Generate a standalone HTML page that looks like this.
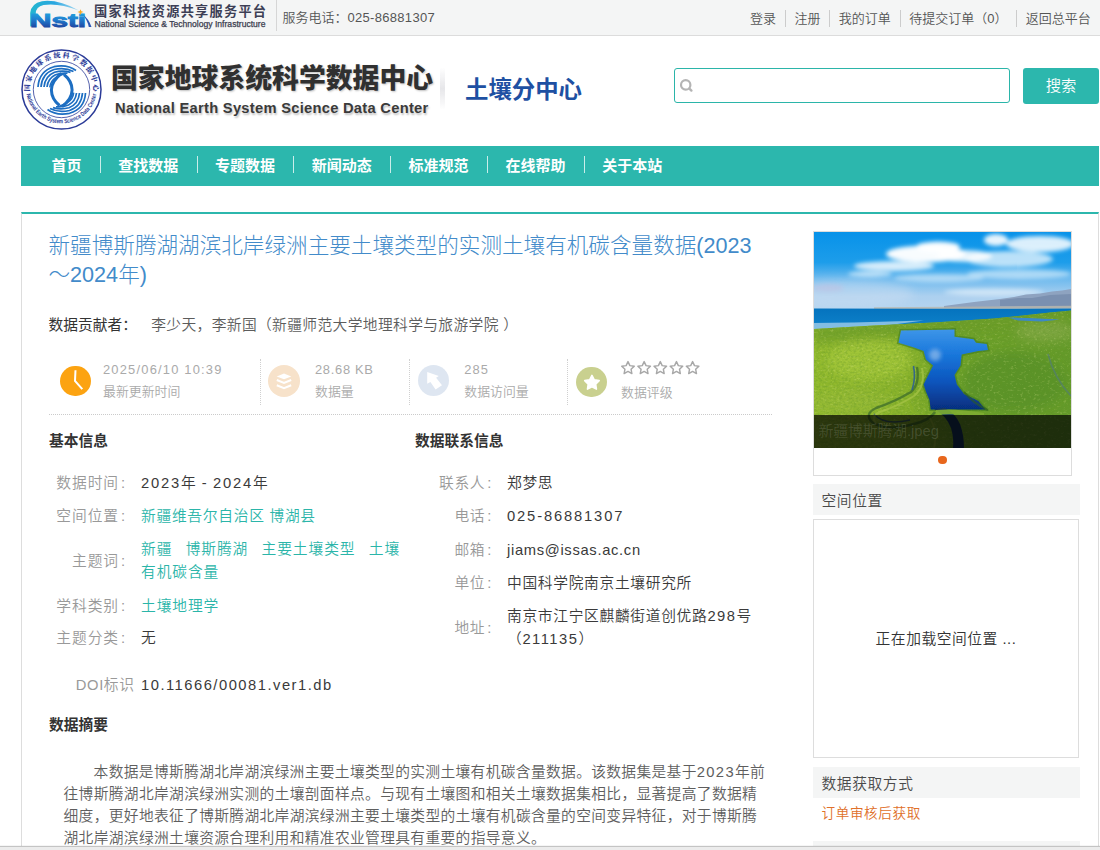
<!DOCTYPE html>
<html lang="zh-CN">
<head>
<meta charset="utf-8">
<title>新疆博斯腾湖湖滨北岸绿洲主要土壤类型的实测土壤有机碳含量数据(2023～2024年)</title>
<style>
*{box-sizing:border-box;margin:0;padding:0}
html,body{width:1100px;height:850px;overflow:hidden;background:#fff}
body{position:relative;font-family:"Liberation Sans","Noto Sans CJK SC",sans-serif;color:#333;font-size:12.6px;font-weight:350}
a{text-decoration:none;color:inherit}
.abs{position:absolute}
/* top bar */
#topbar{position:absolute;left:0;top:0;width:1100px;height:36px;background:#f4f5f5;border-bottom:1px solid #dcdcdc}
#topbar .vsep{position:absolute;left:276px;top:0;width:1px;height:31px;background:#d6d6d6}
#tel{position:absolute;left:282.5px;top:0;line-height:35px;font-size:13px;color:#555;white-space:nowrap}
#toplinks a{position:relative;top:.5px}
#toplinks{position:absolute;right:.5px;top:9.5px;height:17px;display:flex;font-size:13px;color:#555;line-height:17px;white-space:nowrap}
#toplinks a{display:block;padding:0 8.7px;border-left:1px solid #ccc}
#toplinks a:first-child{border-left:none}
/* header */
#title1{position:absolute;left:111px;top:59px;font-size:26.85px;font-weight:900;color:#303030;white-space:nowrap;line-height:40px;letter-spacing:0;text-shadow:1px 1px 2px rgba(0,0,0,.25)}
#title2{position:absolute;left:115px;top:97.5px;font-size:14.7px;letter-spacing:.28px;font-weight:bold;color:#3a3a3a;white-space:nowrap;line-height:20px;text-shadow:1px 2px 2px rgba(0,0,0,.25)}
#hsep{position:absolute;left:440px;top:67px;width:4.5px;height:43px;background:linear-gradient(to bottom,rgba(200,200,200,0),rgba(222,222,226,.75) 50%,rgba(200,200,200,0));filter:blur(.6px)}
#subcenter{position:absolute;left:465px;top:72.5px;font-size:23.4px;font-weight:bold;color:#1e50a2;white-space:nowrap;line-height:34px}
#search{position:absolute;left:674px;top:68px;width:336px;height:35px;border:1px solid #2bb5a9;border-radius:3px;background:#fff}
#sbtn{position:absolute;left:1023px;top:68px;width:76px;height:36px;border-radius:3px;background:#2cb7ad;color:#fff;font-size:15.3px;line-height:36px;text-align:center}
/* nav */
#nav{position:absolute;left:21px;top:146px;width:1078px;height:40px;background:#2cb7ad;color:#fff;font-weight:bold;font-size:15px;line-height:40px;white-space:nowrap;padding-left:12px;display:flex}
#nav a{display:block;padding:0 18.4px;position:relative}
#nav a+a:before{content:"";position:absolute;left:0;top:10px;width:1px;height:17px;background:rgba(255,255,255,.75)}
/* content */
#content{position:absolute;left:21px;top:212px;width:1078px;height:640px;border-top:2px solid #2cb7ad;border-left:1px solid #ddd;border-right:1px solid #ddd}
#scroll{position:absolute;left:0;top:846px;width:1100px;height:4px;background:#ececec;border-top:1px solid #c4c4c4;box-shadow:0 -1px 0 rgba(0,0,0,.04)}

/* detail left */
#main{position:absolute;left:27px;top:0;width:724px}
#dtitle{position:absolute;left:26.5px;top:17px;width:722px;font-size:21.6px;line-height:29.2px;color:#428bca;font-weight:300;word-break:break-all}
#contrib{position:absolute;left:26.5px;top:100px;font-weight:400;font-size:14.74px;line-height:22px;color:#333;white-space:nowrap}
#contrib span{color:#5c5c5c;font-weight:350;margin-left:14.3px;letter-spacing:.38px}
#stats{position:absolute;left:27px;top:144px;width:723px;height:57px;border-bottom:1px dotted #cbcbcb}
.stat{position:absolute;top:0;height:57px}
.stat .vd{position:absolute;left:0;top:1px;width:0;height:46px;border-left:1px dotted #d0d0d0}
.stat .ic{position:absolute;border-radius:50%}
.stat .ic svg{display:block}
.stat .v{position:absolute;top:2px;font-size:12.9px;letter-spacing:.9px;color:#aaa;white-space:nowrap;line-height:20px}
.stat .l{position:absolute;top:24.4px;font-size:12.9px;color:#aaa;white-space:nowrap;line-height:20px}
.h4{position:absolute;font-size:14.74px;font-weight:bold;color:#333;line-height:20px;white-space:nowrap}
table.info{position:absolute;border-collapse:collapse;font-size:14.74px;letter-spacing:.92px;line-height:22.5px}
#t2{letter-spacing:.68px}
.lt{letter-spacing:1.5px}
table.info td{padding:0;vertical-align:middle}
table.info tr{height:32.6px}
table.info tr.two{height:57.4px}
#t2 tr{height:33.3px}
#t2 tr.two{height:56.2px}
table.info td.k i{font-style:normal;margin-left:2px}
table.info td.k{color:#999;text-align:right;white-space:nowrap;padding-right:15px}
table.info td.v{color:#3a3a3a}
table.info a{color:#2bb5a9}
#abs{position:absolute;left:41.5px;top:546.6px;width:706px;font-size:14.74px;letter-spacing:.345px;line-height:22.05px;color:#5e5e5e;font-weight:350;text-indent:30.1px;word-break:break-all}
/* sidebar */
#pic{position:absolute;left:791px;top:17px;width:259px;height:245px;border:1px solid #ddd;background:#fff}
#pic svg{position:absolute;left:0;top:0}
#cap{position:absolute;left:0;top:182.6px;width:257px;height:33.4px;background:rgba(0,0,0,.7);color:rgba(255,255,255,.14);font-size:14.74px;line-height:32px;padding-left:4.5px;white-space:nowrap;overflow:hidden}
#dot{position:absolute;left:124.3px;top:223.8px;width:8.6px;height:8.6px;border-radius:50%;background:#e8671d}
.sh{position:absolute;left:791px;width:267px;height:31px;background:#f4f5f5;font-size:14.74px;letter-spacing:.6px;line-height:35.4px;padding-left:8.5px;color:#4a4a4a;overflow:hidden;white-space:nowrap}
#map{position:absolute;left:791px;top:305px;width:266px;height:239px;border:1px solid #ddd;font-size:14.74px;letter-spacing:.55px;line-height:239px;text-align:center;color:#333}
#getway{position:absolute;left:799.5px;top:590.3px;font-size:13.6px;letter-spacing:.6px;line-height:20px;color:#e0702a;white-space:nowrap}
</style>
</head>
<body>
<div id="topbar">
  <svg id="nsti" class="abs" style="left:28px;top:0" width="250" height="35" viewBox="0 0 250 35">
    <defs><linearGradient id="ng" x1="0" y1="0" x2="0" y2="1"><stop offset="0" stop-color="#21b4e2"/><stop offset=".45" stop-color="#1f7fd0"/><stop offset="1" stop-color="#1f2f8e"/></linearGradient>
    <linearGradient id="sw" x1="0" y1="0" x2="1" y2="0"><stop offset="0" stop-color="#22b6cf"/><stop offset=".5" stop-color="#2aa6e0"/><stop offset="1" stop-color="#6cc4ee" stop-opacity=".6"/></linearGradient></defs>
    <path d="M2.2 26.5 L2.2 13 Q3 3.5 14 1.2 Q30 -1 51 10.5 Q30 2.5 15.5 5 Q7.5 7 7.8 14 L7.8 26.5Z" fill="url(#sw)"/>
    <path d="M53.5 13 Q61 19 63.5 27 L60.8 27 Q59.5 20 53.5 13Z" fill="#2a55b4"/>
    <text x="2" y="26.8" font-family="'Liberation Sans',sans-serif" font-weight="bold" font-size="18.5" fill="url(#ng)" stroke="url(#ng)" stroke-width=".9" textLength="56" lengthAdjust="spacingAndGlyphs">Nsti</text>
    <path d="M52.5 9.2 L53.4 11.3 L55.6 12 L53.4 12.8 L52.5 15 L51.6 12.8 L49.4 12 L51.6 11.3Z" fill="#f7a823"/>
    <text x="66" y="15.5" font-family="'Liberation Sans','Noto Sans CJK SC',sans-serif" font-weight="bold" font-size="13.2" fill="#3d3f55" textLength="172" lengthAdjust="spacing">国家科技资源共享服务平台</text>
    <text x="66.5" y="26.6" font-family="'Liberation Sans',sans-serif" font-size="8.3" fill="#3a3c4e" stroke="#3a3c4e" stroke-width=".25" textLength="171" lengthAdjust="spacingAndGlyphs">National Science &amp; Technology Infrastructure</text>
  </svg>
  <div class="vsep"></div>
  <div id="tel">服务电话：<span style="letter-spacing:.3px">025-86881307</span></div>
  <div id="toplinks"><a>登录</a><a>注册</a><a>我的订单</a><a>待提交订单（0）</a><a>返回总平台</a></div>
</div>
<svg id="logo" class="abs" style="left:19px;top:47px" width="85" height="85" viewBox="-42.5 -42.5 85 85">
  <defs>
    <path id="arcT" d="M-30.6 9 A31.9 31.9 0 1 1 30.6 9"/>
    <path id="arcB" d="M-35.4 -1.5 A35.4 35.4 0 0 0 35.4 -1.5"/>
    <g id="swirl" fill="none" stroke="#1d6ec2" stroke-linecap="butt">
      <path d="M0.5 -16.5 Q-9.5 -9 -9.6 0 Q-9.5 9 -1.5 15.5" stroke-width="3"/>
      <path d="M-23 -3 Q-22 -19 -7 -23.3 Q6 -26 15 -19.5" stroke-width="1.7"/>
      <path d="M-20 -3 Q-19 -16.5 -7 -20.5 Q4 -23 12.5 -18.5" stroke-width="1.7"/>
      <path d="M-17 -3 Q-16 -14 -6.5 -17.8 Q2 -20 9.5 -17.6" stroke-width="1.7"/>
      <path d="M-14 -3 Q-13 -11.5 -6 -15 Q0 -17.5 6.5 -16.8" stroke-width="1.7"/>
      <path d="M-11.2 -2.6 Q-10.5 -9 -5 -12.6 Q-1 -15 3 -16" stroke-width="1.6"/>
    </g>
  </defs>
  <circle r="39.5" fill="#fff" stroke="#2b3b98" stroke-width="1.5"/>
  <circle r="28.2" fill="none" stroke="#2b3b98" stroke-width=".8"/>
  <text font-family="'Liberation Serif','Noto Serif CJK SC',serif" font-weight="900" font-size="7" fill="#2b3b98"><textPath href="#arcT" startOffset="50%" text-anchor="middle" textLength="104" lengthAdjust="spacing">国家地球系统科学数据中心</textPath></text>
  <text font-family="'Liberation Sans',sans-serif" font-weight="bold" font-size="6" fill="#2b3b98"><textPath href="#arcB" startOffset="50%" text-anchor="middle" textLength="99" lengthAdjust="spacingAndGlyphs">National Earth System Science Data Center</textPath></text>
  <use href="#swirl" transform="translate(-.5 .5)"/>
  <use href="#swirl" transform="rotate(180) translate(-1 -.5)"/>
</svg>
<div id="title1">国家地球系统科学数据中心</div>
<div id="title2">National Earth System Science Data Center</div>
<div id="hsep"></div>
<div id="subcenter">土壤分中心</div>
<div id="search"><svg class="abs" style="left:4px;top:9px" width="16" height="16" viewBox="0 0 16 16"><circle cx="6.7" cy="6.9" r="4.7" fill="none" stroke="#b4b4b4" stroke-width="2.2"/><path d="M10.4 10.6 L12.4 12.6" stroke="#b4b4b4" stroke-width="2.4" stroke-linecap="round"/></svg></div>
<div id="sbtn">搜索</div>
<div id="nav"><a>首页</a><a>查找数据</a><a>专题数据</a><a>新闻动态</a><a>标准规范</a><a>在线帮助</a><a>关于本站</a></div>
<div id="content">
  <h3 id="dtitle">新疆博斯腾湖湖滨北岸绿洲主要土壤类型的实测土壤有机碳含量数据(2023～2024年)</h3>
  <div id="contrib">数据贡献者：<span>李少天，李新国（新疆师范大学地理科学与旅游学院 ）</span></div>
  <div id="stats">
    <div class="stat" style="left:0"><div class="ic" style="left:11.2px;top:7.9px;width:30.4px;height:30.4px;background:#fca311"><svg width="30.4" height="30.4" viewBox="-15.2 -15.2 30.4 30.4"><path d="M.3 -11 L-.2 -.4 L7.1 8" fill="none" stroke="#fff" stroke-width="2" stroke-linejoin="miter"/></svg></div><div class="v" style="left:54px;letter-spacing:1.2px">2025/06/10 10:39</div><div class="l" style="left:54px">最新更新时间</div></div>
    <div class="stat" style="left:211px"><div class="vd"></div><div class="ic" style="left:7.7px;top:6.7px;width:32px;height:32px;background:#f7e2ca"><svg width="32" height="32" viewBox="-16 -16 32 32"><path d="M0 -7.4 L7.3 -4.6 L0 -1.8 L-7.3 -4.6Z" fill="#fff"/><path d="M-7.2 -1 L0 1.9 L7.2 -1 M-7.2 4.2 L0 7.1 L7.2 4.2" fill="none" stroke="#fff" stroke-width="2"/></svg></div><div class="v" style="left:55px;letter-spacing:.7px">28.68 KB</div><div class="l" style="left:55px">数据量</div></div>
    <div class="stat" style="left:360px"><div class="vd"></div><div class="ic" style="left:9.2px;top:6.9px;width:31px;height:31px;background:#dee6f1"><svg width="31" height="31" viewBox="-15.5 -15.5 31 31"><path d="M-6.3 -8.4 L5.3 -4.4 L2.6 -2.7 L8.5 4.7 L2.1 8.9 L-3.1 1.5 L-6.3 3.2Z" fill="#fff"/></svg></div><div class="v" style="left:55.3px;letter-spacing:1.1px">285</div><div class="l" style="left:55.3px">数据访问量</div></div>
    <div class="stat" style="left:518px"><div class="vd"></div><div class="ic" style="left:9.1px;top:8.7px;width:30.7px;height:30.7px;background:#c9d08f"><svg width="30.7" height="30.7" viewBox="-15.35 -15.35 30.7 30.7"><path d="M0.60 -7.00 L2.89 -2.56 L7.83 -1.75 L4.31 1.81 L5.07 6.75 L0.60 4.50 L-3.87 6.75 L-3.11 1.81 L-6.63 -1.75 L-1.69 -2.56Z" fill="#fff" stroke="#fff" stroke-width="1.6" stroke-linejoin="round"/></svg></div><svg class="abs" style="left:53px;top:1.5px" width="84" height="16" viewBox="0 0 84 16" fill="none" stroke="#a8a8a8" stroke-width="1.45" stroke-linejoin="round"><path d="M8.00 1.60 L9.88 5.61 L14.28 6.16 L11.04 9.19 L11.88 13.54 L8.00 11.40 L4.12 13.54 L4.96 9.19 L1.72 6.16 L6.12 5.61Z"/><path d="M24.15 1.60 L26.03 5.61 L30.43 6.16 L27.19 9.19 L28.03 13.54 L24.15 11.40 L20.27 13.54 L21.11 9.19 L17.87 6.16 L22.27 5.61Z"/><path d="M40.30 1.60 L42.18 5.61 L46.58 6.16 L43.34 9.19 L44.18 13.54 L40.30 11.40 L36.42 13.54 L37.26 9.19 L34.02 6.16 L38.42 5.61Z"/><path d="M56.45 1.60 L58.33 5.61 L62.73 6.16 L59.49 9.19 L60.33 13.54 L56.45 11.40 L52.57 13.54 L53.41 9.19 L50.17 6.16 L54.57 5.61Z"/><path d="M72.60 1.60 L74.48 5.61 L78.88 6.16 L75.64 9.19 L76.48 13.54 L72.60 11.40 L68.72 13.54 L69.56 9.19 L66.32 6.16 L70.72 5.61Z"/></svg><div class="l" style="left:54px;top:24.8px">数据评级</div></div>
  </div>
  <div class="h4" style="left:27px;top:216.5px">基本信息</div>
  <div class="h4" style="left:393px;top:216.5px">数据联系信息</div>
  <table class="info" style="left:27px;top:253px;width:366px">
    <tr><td class="k" style="width:92px">数据时间<i>:</i></td><td class="v"><span class="lt" style="letter-spacing:1.8px">2023</span>年 <span class="lt">-</span> <span class="lt" style="letter-spacing:1.8px">2024</span>年</td></tr>
    <tr><td class="k">空间位置<i>:</i></td><td class="v"><a style="letter-spacing:.72px">新疆维吾尔自治区 博湖县</a></td></tr>
    <tr class="two"><td class="k">主题词<i>:</i></td><td class="v"><a>新疆</a>&ensp; <a>博斯腾湖</a>&ensp; <a>主要土壤类型</a>&ensp; <a>土壤有机碳含量</a></td></tr>
    <tr><td class="k">学科类别<i>:</i></td><td class="v"><a>土壤地理学</a></td></tr>
    <tr><td class="k">主题分类<i>:</i></td><td class="v">无</td></tr>
  </table>
  <table class="info" style="left:27px;top:455.4px;width:366px">
    <tr><td class="k" style="width:92px;letter-spacing:.6px;padding-right:6.5px">DOI标识</td><td class="v"><span class="lt">10.11666/00081.ver1.db</span></td></tr>
  </table>
  <table class="info" id="t2" style="left:393px;top:252.6px;width:357px">
    <tr><td class="k" style="width:92px">联系人<i>:</i></td><td class="v">郑梦思</td></tr>
    <tr><td class="k">电话<i>:</i></td><td class="v"><span class="lt" style="letter-spacing:1.85px">025-86881307</span></td></tr>
    <tr><td class="k">邮箱<i>:</i></td><td class="v"><span class="lt" style="letter-spacing:.68px">jiams@issas.ac.cn</span></td></tr>
    <tr><td class="k">单位<i>:</i></td><td class="v">中国科学院南京土壤研究所</td></tr>
    <tr class="two"><td class="k">地址<i>:</i></td><td class="v">南京市江宁区麒麟街道创优路<span class="lt">298</span>号（<span class="lt">211135</span>）</td></tr>
  </table>
  <div class="h4" style="left:27px;top:500.5px">数据摘要</div>
  <p id="abs">本数据是博斯腾湖北岸湖滨绿洲主要土壤类型的实测土壤有机碳含量数据。该数据集是基于<span style="letter-spacing:1.35px">2023</span>年前往博斯腾湖北岸湖滨绿洲实测的土壤剖面样点。与现有土壤图和相关土壤数据集相比，显著提高了数据精细度，更好地表征了博斯腾湖北岸湖滨绿洲主要土壤类型的土壤有机碳含量的空间变异特征，对于博斯腾湖北岸湖滨绿洲土壤资源合理利用和精准农业管理具有重要的指导意义。</p>
  <div id="pic">
    <svg width="257" height="216" viewBox="0 0 257 216">
      <defs>
        <linearGradient id="sky" x1="0" y1="0" x2="0" y2="1"><stop offset="0" stop-color="#0792e9"/><stop offset=".38" stop-color="#1d9dea"/><stop offset=".58" stop-color="#6bb9ee"/><stop offset=".8" stop-color="#acd0ef"/><stop offset="1" stop-color="#b6d5ef"/></linearGradient>
        <linearGradient id="lake" x1="0" y1="0" x2="0" y2="1"><stop offset="0" stop-color="#0573be"/><stop offset=".6" stop-color="#0b7dc6"/><stop offset="1" stop-color="#2b93d4"/></linearGradient>
        <linearGradient id="land" x1="0" y1="0" x2="1" y2="0"><stop offset="0" stop-color="#93bb2f"/><stop offset=".36" stop-color="#8ab32c"/><stop offset=".58" stop-color="#6fa22a"/><stop offset="1" stop-color="#649a2a"/></linearGradient>
        <linearGradient id="pond" x1="0" y1="0" x2="0" y2="1"><stop offset="0" stop-color="#3d95e8"/><stop offset=".3" stop-color="#1a78dc"/><stop offset=".65" stop-color="#0b55bd"/><stop offset="1" stop-color="#062f7e"/></linearGradient>
        <filter id="b2" x="-20%" y="-20%" width="140%" height="140%"><feGaussianBlur stdDeviation="2"/></filter>
        <filter id="b1" x="-20%" y="-20%" width="140%" height="140%"><feGaussianBlur stdDeviation=".7"/></filter>
        <filter id="b4" x="-30%" y="-30%" width="160%" height="160%"><feGaussianBlur stdDeviation="5"/></filter>
        <filter id="tex" x="0" y="0" width="100%" height="100%"><feTurbulence type="fractalNoise" baseFrequency=".35 .5" numOctaves="3" seed="7" result="n"/><feColorMatrix in="n" type="matrix" values="0 0 0 0 .12  0 0 0 0 .3  0 0 0 0 .02  0 0 0 -2.2 1.35"/></filter>
        <filter id="texl" x="0" y="0" width="100%" height="100%"><feTurbulence type="fractalNoise" baseFrequency=".3 .45" numOctaves="3" seed="3" result="n"/><feColorMatrix in="n" type="matrix" values="0 0 0 0 .85  0 0 0 0 .9  0 0 0 0 .35  0 0 0 2.2 -1.25"/></filter>
        <clipPath id="landclip"><path d="M0 97 L60 93.5 L120 90.5 L180 86.5 L236 80.5 L257 78.5 L257 216 L0 216Z"/></clipPath>
      </defs>
      <rect width="257" height="80" fill="url(#sky)"/>
      <ellipse cx="30" cy="62" rx="70" ry="14" fill="#cfe0f3" opacity=".45" filter="url(#b4)"/>
      <g filter="url(#b2)" fill="#fff">
        <ellipse cx="112" cy="22" rx="40" ry="8.5" opacity=".97"/>
        <ellipse cx="124" cy="15" rx="22" ry="5.5" opacity=".97"/>
        <ellipse cx="150" cy="24" rx="28" ry="6" opacity=".85"/>
        <ellipse cx="80" cy="34" rx="40" ry="5" opacity=".8"/>
        <ellipse cx="56" cy="42" rx="22" ry="3" opacity=".6"/>
        <ellipse cx="195" cy="27" rx="44" ry="8" opacity=".7"/>
        <ellipse cx="226" cy="12" rx="34" ry="8" opacity=".85"/>
        <ellipse cx="182" cy="8" rx="12" ry="6" opacity=".9"/>
        <ellipse cx="205" cy="42" rx="52" ry="5" opacity=".5"/>
        <ellipse cx="125" cy="46" rx="45" ry="4" opacity=".45"/>
        <ellipse cx="14" cy="56" rx="16" ry="4" opacity=".5" fill="#c3bfe0"/>
        <ellipse cx="180" cy="60" rx="50" ry="3.5" opacity=".5"/>
      </g>
      <path d="M130 74 L160 70 L186 67 L200 65 L212 62.5 L226 61.5 L238 59.5 L248 58.5 L257 57 L257 76 L130 76Z" fill="#8ea3c0" filter="url(#b1)"/>
      <path d="M186 68 L204 66 L218 66 L236 63 L257 62 L257 74 L186 74Z" fill="#6b82a3" opacity=".55" filter="url(#b1)"/>
      <path d="M60 75.2 L257 73.8 L257 77.6 L60 77.2Z" fill="#b9b6aa" opacity=".75" filter="url(#b1)"/>
      <path d="M0 76.6 L120 76.8 L257 76.6 L257 79 L236 81 L180 87 L120 91 L60 94 L0 98Z" fill="url(#lake)"/>
      <path d="M0 91 L40 90.6 L110 88.6 L60 95 L0 99Z" fill="#8fc4e6" opacity=".9" filter="url(#b1)"/>
      <path d="M0 97 L60 93.5 L120 90.5 L180 86.5 L236 80.5 L257 78.5 L257 216 L0 216Z" fill="url(#land)"/>
      <g clip-path="url(#landclip)">
        <g filter="url(#b4)">
          <path d="M0 92 L257 76 L257 92 L0 112Z" fill="#6d9c26" opacity=".75"/>
          <ellipse cx="55" cy="128" rx="42" ry="20" fill="#a8ca3c" opacity=".7"/>
          <ellipse cx="200" cy="150" rx="52" ry="30" fill="#55902a" opacity=".75"/>
          <ellipse cx="232" cy="100" rx="30" ry="10" fill="#86a94a" opacity=".7"/>
          <ellipse cx="36" cy="170" rx="40" ry="12" fill="#97bb38" opacity=".6"/>
          <ellipse cx="110" cy="160" rx="10" ry="22" fill="#7aa62a" opacity=".6"/>
        </g>
        <rect x="0" y="78" width="257" height="138" filter="url(#tex)" opacity=".4"/>
        <rect x="0" y="78" width="257" height="138" filter="url(#texl)" opacity=".35"/>
      </g>
      <path d="M194 85.5 L214 86 L246 87.5 L228 89.5 L204 88.5Z" fill="#3d88c6" filter="url(#b1)"/>
      <path d="M87 98.5 L140.5 97.6 L140.5 104.8 L159.6 107.2 L162 110.7 L172.7 111.9 L174 117.9 L164.3 119.1 L147.7 122.6 L146.5 133.4 L140.5 142.9 L142.9 152.4 L150.1 161.9 L164.3 169.1 L171.5 177.4 L116.7 177.4 L115.5 167.9 L111.9 159.6 L109.6 152.4 L114.3 142.9 L119.1 133.4 L111.9 127.4 L109.6 119.1 L100 115.5 L84.5 110.7Z" fill="none" stroke="#3f7a1e" stroke-width="3.2" opacity=".55" filter="url(#b1)"/>
      <path d="M87 98.5 L140.5 97.6 L140.5 104.8 L159.6 107.2 L162 110.7 L172.7 111.9 L174 117.9 L164.3 119.1 L147.7 122.6 L146.5 133.4 L140.5 142.9 L142.9 152.4 L150.1 161.9 L164.3 169.1 L171.5 177.4 L116.7 177.4 L115.5 167.9 L111.9 159.6 L109.6 152.4 L114.3 142.9 L119.1 133.4 L111.9 127.4 L109.6 119.1 L100 115.5 L84.5 110.7Z" fill="url(#pond)" filter="url(#b1)"/>
      <ellipse cx="121" cy="123" rx="6" ry="6" fill="#a9c9ee" opacity=".6" filter="url(#b2)"/>
      <path d="M120 177 Q132 183 137 196 Q140 206 139 216 L150 216 Q150 203 146 192 Q141 181 131 176Z" fill="#17365f" filter="url(#b1)"/>
      <path d="M103 135 Q106 152 97 160 Q80 170 62 176 Q50 182 58 190 Q72 200 100 192 Q116 188 121 180" fill="none" stroke="#3c6d2b" stroke-width="2.4" opacity=".75" filter="url(#b1)"/>
      <path d="M99.5 134 Q102 146 98 158" fill="none" stroke="#285c9a" stroke-width="1.6" opacity=".85"/>
      <path d="M60 182 Q70 194 96 188" fill="none" stroke="#2a4e74" stroke-width="1.5" opacity=".8" filter="url(#b1)"/>
      <path d="M234 122 Q240 146 257 164" fill="none" stroke="#54806a" stroke-width="1.6" opacity=".8" filter="url(#b1)"/>
      <path d="M108 136 Q112 154 100 164 Q84 174 66 180 Q56 185 62 191" fill="none" stroke="#a9c648" stroke-width="2" opacity=".7" filter="url(#b1)"/>
      <path d="M122 178 Q140 176 170 181 L170 185 Q140 181 122 183Z" fill="#7fae30" opacity=".9" filter="url(#b1)"/>
      <path d="M150 160 Q160 172 174 178" fill="none" stroke="#2f5f1c" stroke-width="2" opacity=".6" filter="url(#b1)"/>
      <path d="M120 216 Q124 200 116 186" fill="none" stroke="#9cbb3a" stroke-width="1.6" opacity=".8" filter="url(#b1)"/>
    </svg>
    <div id="cap">新疆博斯腾湖.jpeg</div>
    <div id="dot"></div>
  </div>
  <div class="sh" style="top:270px">空间位置</div>
  <div id="map">正在加载空间位置 ...</div>
  <div class="sh" style="top:553px">数据获取方式</div>
  <div id="getway">订单审核后获取</div>
  <div class="sh" style="top:627px;height:10px"></div>
</div>
<div id="scroll"></div>
</body>
</html>
